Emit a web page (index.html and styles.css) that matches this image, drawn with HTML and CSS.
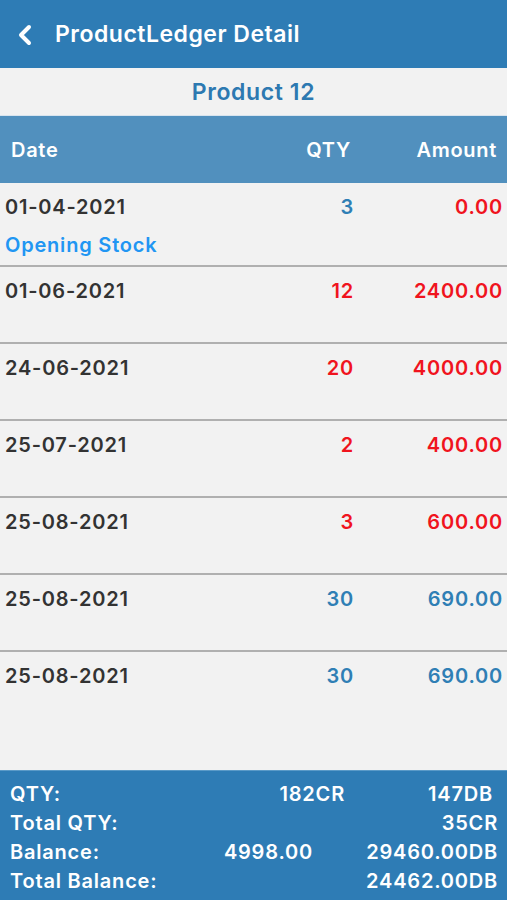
FILE: index.html
```html
<!DOCTYPE html>
<html>
<head>
<meta charset="utf-8">
<link rel="stylesheet" href="styles.css">
</head>
<body>
<div class="app">
  <header class="nav">
    <svg class="back" width="16" height="22" viewBox="0 0 16 22"><path d="M12 3 L4 11 L12 19" fill="none" stroke="#fff" stroke-width="4" stroke-linecap="round" stroke-linejoin="round"/></svg>
    <span class="nav-title">ProductLedger Detail</span>
  </header>
  <div class="product">Product 12</div>
  <div class="thead">
    <span class="c-date">Date</span>
    <span class="c-qty">QTY</span>
    <span class="c-amt">Amount</span>
  </div>
  <div class="rows">
    <div class="row first">
      <div class="line"><span class="c-date">01-04-2021</span><span class="c-qty blue">3</span><span class="c-amt red">0.00</span></div>
      <div class="note">Opening Stock</div>
    </div>
    <div class="row">
      <div class="line"><span class="c-date">01-06-2021</span><span class="c-qty red">12</span><span class="c-amt red">2400.00</span></div>
    </div>
    <div class="row">
      <div class="line"><span class="c-date">24-06-2021</span><span class="c-qty red">20</span><span class="c-amt red">4000.00</span></div>
    </div>
    <div class="row">
      <div class="line"><span class="c-date">25-07-2021</span><span class="c-qty red">2</span><span class="c-amt red">400.00</span></div>
    </div>
    <div class="row">
      <div class="line"><span class="c-date">25-08-2021</span><span class="c-qty red">3</span><span class="c-amt red">600.00</span></div>
    </div>
    <div class="row">
      <div class="line"><span class="c-date">25-08-2021</span><span class="c-qty blue">30</span><span class="c-amt blue">690.00</span></div>
    </div>
    <div class="row last">
      <div class="line"><span class="c-date">25-08-2021</span><span class="c-qty blue">30</span><span class="c-amt blue">690.00</span></div>
    </div>
  </div>
  <footer class="summary">
    <span class="s-label">QTY:</span><span class="s-mid m1">182CR</span><span class="s-right r1">147DB</span>
    <span class="s-label">Total QTY:</span><span class="s-mid"></span><span class="s-right">35CR</span>
    <span class="s-label">Balance:</span><span class="s-mid m2">4998.00</span><span class="s-right">29460.00DB</span>
    <span class="s-label">Total Balance:</span><span class="s-mid"></span><span class="s-right">24462.00DB</span>
  </footer>
</div>
</body>
</html>
```
FILE: styles.css
```css
* { box-sizing: border-box; margin: 0; padding: 0; }
html, body { width: 507px; height: 900px; overflow: hidden; }
body { font-family: "Inter", "Liberation Sans", sans-serif; font-weight: 700; background: #f2f2f2; }
.app { display: flex; flex-direction: column; height: 900px; }
.nav { height: 68px; background: #2e7cb5; display: flex; align-items: center; padding-left: 17px; gap: 22px; color: #fff; }
.back { display: block; margin-top: 1px; }
.nav-title { font-size: 23px; font-weight: 600; letter-spacing: 0.5px; }
.product { height: 48px; display: flex; align-items: center; justify-content: center; color: #2d79b1; font-size: 23px; font-weight: 600; letter-spacing: 0.6px; border-bottom: 1px solid #d8e4ee; }
.thead { height: 67px; background: #5190be; color: #fff; display: flex; align-items: center; font-size: 20px; font-weight: 600; letter-spacing: 0.7px; padding: 0 10px 0 11px; }
.thead .c-qty { margin-left: auto; }
.thead .c-amt { width: 146px; text-align: right; }
.rows { flex: 1; }
.row { height: 77px; border-bottom: 2px solid #b0b0b0; padding: 12px 4px 0 5px; }
.row.first { height: 84px; }
.row.last { border-bottom: none; }
.line { display: flex; align-items: center; font-size: 20px; font-weight: 600; letter-spacing: 0.8px; color: #333; height: 24px; }
.line .c-qty { margin-left: auto; }
.line .c-amt { width: 149px; text-align: right; }
.note { margin-top: 14px; font-size: 20px; font-weight: 600; letter-spacing: 0.8px; color: #2196f3; }
.blue { color: #2f7fb5; }
.red { color: #f0141e; }
.summary { height: 130px; background: #2e7cb5; color: #fff; display: grid; grid-template-columns: 1fr 180px 140px; grid-auto-rows: 29px; padding: 8px 9px 0 10px; font-size: 20px; font-weight: 600; letter-spacing: 0.8px; align-items: center; border-top: 1px solid #5a9ac8; }
.s-mid { text-align: right; }
.s-mid.m1 { padding-right: 13px; }
.s-mid.m2 { padding-right: 45px; }
.s-right { text-align: right; }
.s-right.r1 { padding-right: 5px; }
```
